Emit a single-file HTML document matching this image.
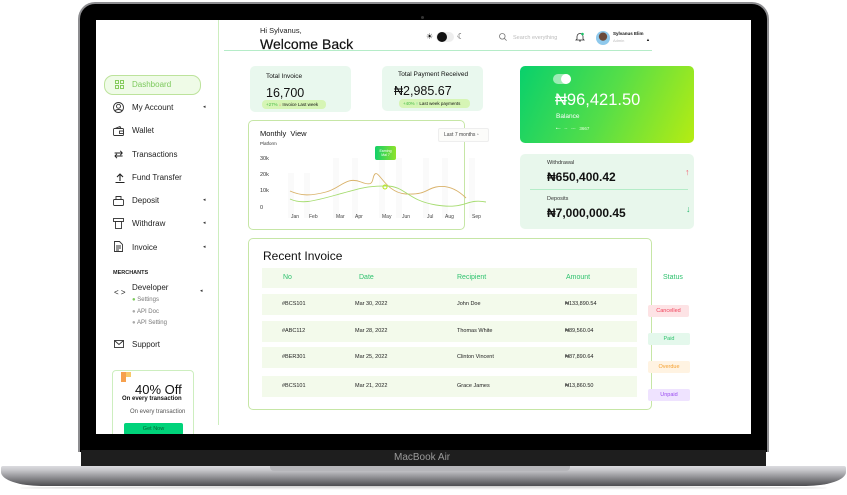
<!DOCTYPE html>
<html><head><meta charset="utf-8"><style>
*{margin:0;padding:0;box-sizing:border-box}
body{width:847px;height:495px;background:#fff;position:relative;overflow:hidden;font-family:"Liberation Sans",sans-serif;color:#111}
.a{position:absolute;white-space:nowrap}
.lid{position:absolute;left:78px;top:2px;width:691px;height:450px;background:#000;border:2px solid #8d8d90;border-bottom:none;border-radius:17px 17px 0 0}
.screen{position:absolute;left:96px;top:20px;width:655px;height:414px;background:#fff;overflow:hidden}
.nav{font-size:8px;color:#222}
.caret{font-size:5px;color:#333}
.card{position:absolute;border-radius:5px}
.row{position:absolute;left:166px;width:375px;height:21px;background:#f3faeb;font-size:5.5px;color:#222}
.row span{position:absolute;top:7px}
.badge{position:absolute;left:552px;width:42px;height:12px;border-radius:2px;font-size:5.5px;text-align:center;line-height:12px}
</style></head><body>
<div class="lid"></div>
<div class="a" style="left:421px;top:16px;width:3px;height:3px;border-radius:50%;background:#333"></div>
<div class="a" style="left:81px;top:450px;width:685px;height:16px;background:#1e1e1e"></div>
<div class="a" style="left:394px;top:452px;font-size:10px;color:#9a9a9a">MacBook Air</div>
<div class="a" style="left:1px;top:466px;width:845px;height:20px;border-radius:2px 2px 40px 40px/2px 2px 14px 14px;background:linear-gradient(#dcdce0 0,#c8c8cc 20%,#8a8a8e 60%,#4d4d50 100%)"></div>
<div class="a" style="left:270px;top:466px;width:300px;height:5px;background:#b6b6ba;border-radius:0 0 4px 4px"></div>
<div class="a" style="left:20px;top:486px;width:807px;height:4px;background:linear-gradient(#ccc,#fff);border-radius:50%"></div>

<div class="screen">
<div class="a" style="left:122px;top:0;width:1px;height:405px;background:#cdeebf"></div>
<div class="a" style="left:8px;top:55px;width:97px;height:20px;border:1px solid #bde39c;background:#effbe7;border-radius:9px"></div>
<svg class="a" style="left:19px;top:60px" width="9" height="9" viewBox="0 0 9 9" fill="none" stroke="#86cc5e" stroke-width="1"><rect x="0.5" y="0.5" width="3" height="3"/><rect x="5.5" y="0.5" width="3" height="3"/><rect x="0.5" y="5.5" width="3" height="3"/><rect x="5.5" y="5.5" width="3" height="3"/></svg>
<div class="a nav" style="left:36px;top:60px;color:#7cc95c">Dashboard</div>
<svg class="a" style="left:17px;top:82px" width="11" height="11" viewBox="0 0 11 11" fill="none" stroke="#333" stroke-width="0.9"><circle cx="5.5" cy="5.5" r="5"/><circle cx="5.5" cy="4.3" r="2"/><path d="M2 9c1-2 6-2 7 0"/></svg>
<div class="a nav" style="left:36px;top:83px">My Account</div><div class="a caret" style="left:107px;top:84px">◂</div>
<svg class="a" style="left:17px;top:106px" width="11" height="10" viewBox="0 0 11 10" fill="none" stroke="#333" stroke-width="0.9"><rect x="0.5" y="2.5" width="10" height="7" rx="1"/><path d="M2 2.5L7 0.5 8 2.5"/><rect x="6.5" y="5" width="4" height="2.5"/></svg>
<div class="a nav" style="left:36px;top:106px">Wallet</div>
<div class="a" style="left:18px;top:128px;font-size:11px;color:#222">⇄</div>
<div class="a nav" style="left:36px;top:130px">Transactions</div>
<svg class="a" style="left:19px;top:153px" width="10" height="10" viewBox="0 0 10 10" fill="none" stroke="#222" stroke-width="1.1"><path d="M5 8V1M2 4l3-3 3 3M0.5 9.5h9"/></svg>
<div class="a nav" style="left:36px;top:153px">Fund Transfer</div>
<svg class="a" style="left:17px;top:175px" width="11" height="11" viewBox="0 0 11 11" fill="none" stroke="#333" stroke-width="0.9"><rect x="0.5" y="4.5" width="10" height="6" rx="1"/><path d="M3 4.5V1.5h5v3"/></svg>
<div class="a nav" style="left:36px;top:176px">Deposit</div><div class="a caret" style="left:107px;top:177px">◂</div>
<svg class="a" style="left:17px;top:198px" width="11" height="11" viewBox="0 0 11 11" fill="none" stroke="#333" stroke-width="0.9"><rect x="0.5" y="0.5" width="10" height="3"/><rect x="2.5" y="3.5" width="6" height="7"/></svg>
<div class="a nav" style="left:36px;top:199px">Withdraw</div><div class="a caret" style="left:107px;top:200px">◂</div>
<svg class="a" style="left:18px;top:221px" width="9" height="11" viewBox="0 0 9 11" fill="none" stroke="#333" stroke-width="0.9"><path d="M0.5 0.5h5l3 3v7h-8z"/><path d="M2 5h5M2 7h5M2 9h3"/></svg>
<div class="a nav" style="left:36px;top:223px">Invoice</div><div class="a caret" style="left:107px;top:224px">◂</div>
<div class="a" style="left:17px;top:250px;font-size:5.5px;font-weight:bold;color:#222">MERCHANTS</div>
<div class="a" style="left:18px;top:268px;font-size:8px;color:#222">&lt; &gt;</div>
<div class="a nav" style="left:36px;top:263px">Developer</div><div class="a caret" style="left:104px;top:268px">◂</div>
<div class="a" style="left:36px;top:277px;font-size:6px;color:#777"><span style="color:#7cc95c">●</span> Settings</div>
<div class="a" style="left:36px;top:289px;font-size:6px;color:#777"><span style="color:#aaa">●</span> API Doc</div>
<div class="a" style="left:36px;top:300px;font-size:6px;color:#777"><span style="color:#aaa">●</span> API Setting</div>
<svg class="a" style="left:18px;top:319px" width="10" height="10" viewBox="0 0 10 10" fill="none" stroke="#333" stroke-width="0.9"><rect x="0.5" y="1.5" width="9" height="7"/><path d="M0.5 1.5l4.5 4 4.5-4"/></svg>
<div class="a nav" style="left:36px;top:320px">Support</div>
<div class="a" style="left:16px;top:350px;width:82px;height:70px;border:1px solid #cdeebf;border-radius:4px"></div>
<div class="a" style="left:25px;top:352px;width:5px;height:10px;background:#f6a04d"></div>
<div class="a" style="left:30px;top:352px;width:5px;height:5px;background:#f8c86a"></div>
<div class="a" style="left:39px;top:363px;font-size:13px;line-height:13px;color:#111">40% Off</div>
<div class="a" style="left:26px;top:376px;font-size:6px;line-height:6px;font-weight:bold">On every transaction</div>
<div class="a" style="left:34px;top:389px;font-size:6px;color:#555">On every transaction</div>
<div class="a" style="left:28px;top:403px;width:59px;height:12px;background:#00d37a;border-radius:2px;font-size:5.5px;text-align:center;line-height:12px;color:#063">Get Now</div>

<div class="a" style="left:164px;top:6px;font-size:7.5px;color:#222">Hi Sylvanus,</div>
<div class="a" style="left:164px;top:16px;font-size:14px;color:#111;-webkit-text-stroke:0.2px #111">Welcome Back</div>
<div class="a" style="left:128px;top:30px;width:428px;height:1px;background:#b5ecc8"></div>
<div class="a" style="left:330px;top:12px;font-size:8px">☀</div>
<div class="a" style="left:340px;top:12px;width:18px;height:10px;border-radius:5px;background:#eee"></div>
<div class="a" style="left:341px;top:12px;width:10px;height:10px;border-radius:50%;background:#111"></div>
<div class="a" style="left:361px;top:12px;font-size:8px">☾</div>
<svg class="a" style="left:403px;top:13px" width="8" height="8" viewBox="0 0 8 8" fill="none" stroke="#777" stroke-width="0.8"><circle cx="3.3" cy="3.3" r="2.8"/><path d="M5.3 5.3L7.6 7.6"/></svg>
<div class="a" style="left:417px;top:15px;font-size:5.5px;color:#bbb">Search everything</div>
<svg class="a" style="left:479px;top:12px" width="10" height="10" viewBox="0 0 10 10" fill="none" stroke="#333" stroke-width="0.8"><path d="M2 7V4.5a3 3 0 0 1 6 0V7l1 1H1z M4 9h2"/><circle cx="7.5" cy="2" r="1.3" fill="#1bc56a" stroke="none"/></svg>
<div class="a" style="left:500px;top:11px;width:14px;height:14px;border-radius:50%;background:radial-gradient(circle at 50% 40%,#6b4a3a 35%,#8fc9ec 40%)"></div>
<div class="a" style="left:517px;top:11px;font-size:4.5px;font-weight:bold">Sylvanus Elim</div>
<div class="a" style="left:517px;top:18px;font-size:4px;color:#bbb">Admin</div>
<div class="a" style="left:550px;top:17px;font-size:4px">▲</div>

<div class="card" style="left:154px;top:46px;width:101px;height:46px;background:#e9f8ee"></div>
<div class="a" style="left:170px;top:53px;font-size:6.5px">Total Invoice</div>
<div class="a" style="left:170px;top:66px;font-size:12.5px">16,700</div>
<div class="a" style="left:166px;top:80px;width:64px;height:9px;border-radius:4px;background:#d6f5b5;font-size:4.5px;line-height:9px;padding-left:4px"><span style="color:#4b4">+27%</span> <span style="color:#e44">↓</span> Invoice Last week</div>
<div class="card" style="left:286px;top:46px;width:101px;height:45px;background:#e9f8ee"></div>
<div class="a" style="left:302px;top:51px;font-size:6.5px">Total Payment Received</div>
<div class="a" style="left:298px;top:64px;font-size:12.5px">₦2,985.67</div>
<div class="a" style="left:303px;top:79px;width:71px;height:9px;border-radius:4px;background:#d6f5b5;font-size:4.5px;line-height:9px;padding-left:4px"><span style="color:#4b4">+40%</span> <span style="color:#2c6">↑</span> Last week payments</div>

<div class="card" style="left:424px;top:46px;width:174px;height:77px;background:linear-gradient(115deg,#08d06c 0%,#55de48 50%,#b6ec12 100%)"></div>
<div class="a" style="left:457px;top:54px;width:18px;height:10px;border-radius:5px;background:rgba(255,255,255,.55)"></div>
<div class="a" style="left:465px;top:54px;width:10px;height:10px;border-radius:50%;background:#fff"></div>
<div class="a" style="left:459px;top:71px;font-size:16.5px;color:#fff">₦96,421.50</div>
<div class="a" style="left:460px;top:93px;font-size:6.5px;color:#fff">Balance</div>
<div class="a" style="left:460px;top:106px;font-size:4.5px;color:#e8ffe0">•‐‐ &nbsp;&nbsp;‐‐ &nbsp;&nbsp;‐‐‐ &nbsp;&nbsp;3667</div>
<div class="card" style="left:424px;top:134px;width:174px;height:75px;background:#e8f7ec"></div>
<div class="a" style="left:451px;top:140px;font-size:5.5px;color:#333">Withdrawal</div>
<div class="a" style="left:451px;top:150px;font-size:12px;font-weight:bold;color:#111">₦650,400.42</div>
<div class="a" style="left:434px;top:169px;width:158px;height:1px;background:#b5ecc8"></div>
<div class="a" style="left:451px;top:176px;font-size:5.5px;color:#333">Deposits</div>
<div class="a" style="left:451px;top:186px;font-size:12px;font-weight:bold;color:#111">₦7,000,000.45</div>
<div class="a" style="left:589px;top:147px;font-size:9px;color:#f06070">↑</div>
<div class="a" style="left:590px;top:184px;font-size:9px;color:#2cb870">↓</div>

<div class="card" style="left:152px;top:100px;width:217px;height:110px;border:1px solid #c6e6a6;border-radius:5px"></div>
<div class="a" style="left:164px;top:109px;font-size:7.5px">Monthly&nbsp; View</div>
<div class="a" style="left:164px;top:121px;font-size:4.5px;color:#333">Platform</div>
<div class="a" style="left:342px;top:108px;width:51px;height:14px;border:1px solid #eee;border-radius:2px;background:#fcfcfa;font-size:5px;line-height:12px;padding-left:5px;color:#444">Last 7 months ▫</div>
<div class="a" style="left:164px;top:136px;font-size:5.5px;color:#333">30k</div>
<div class="a" style="left:164px;top:152px;font-size:5.5px;color:#333">20k</div>
<div class="a" style="left:164px;top:168px;font-size:5.5px;color:#333">10k</div>
<div class="a" style="left:164px;top:185px;font-size:5.5px;color:#333">0</div>
<svg class="a" style="left:180px;top:128px" width="210" height="75" viewBox="0 0 210 75">
<g fill="#fafafa"><rect x="12" y="25" width="6" height="45"/><rect x="28" y="25" width="6" height="45"/><rect x="57" y="10" width="6" height="60"/><rect x="76" y="10" width="6" height="60"/><rect x="103" y="10" width="6" height="60"/><rect x="120" y="10" width="6" height="60"/><rect x="147" y="10" width="6" height="60"/><rect x="166" y="10" width="6" height="60"/><rect x="193" y="10" width="6" height="60"/></g>
<path d="M14 43C25 48 35 48 50 44S70 28 85 34 95 30 99 26 110 45 130 46 150 41 160 39 180 40 190 50" fill="none" stroke="#d9b26a" stroke-width="0.9"/>
<path d="M14 51C25 56 35 54 60 47S90 38 110 38 130 52 160 57 190 50 210 54" fill="none" stroke="#a6dc70" stroke-width="0.9"/>
<circle cx="109" cy="39" r="2" fill="none" stroke="#b6e61a" stroke-width="1"/>
</svg>
<div class="a" style="left:279px;top:126px;width:21px;height:14px;border-radius:2px;background:linear-gradient(90deg,#12d06a,#8fe22a);font-size:3.5px;color:#fff;text-align:center;padding-top:3px;line-height:4px">Earning<br>Mai 7</div>
<div class="a" style="left:195px;top:194px;font-size:5px;color:#444">Jan</div>
<div class="a" style="left:213px;top:194px;font-size:5px;color:#444">Feb</div>
<div class="a" style="left:240px;top:194px;font-size:5px;color:#444">Mar</div>
<div class="a" style="left:259px;top:194px;font-size:5px;color:#444">Apr</div>
<div class="a" style="left:286px;top:194px;font-size:5px;color:#444">May</div>
<div class="a" style="left:306px;top:194px;font-size:5px;color:#444">Jun</div>
<div class="a" style="left:331px;top:194px;font-size:5px;color:#444">Jul</div>
<div class="a" style="left:349px;top:194px;font-size:5px;color:#444">Aug</div>
<div class="a" style="left:376px;top:194px;font-size:5px;color:#444">Sep</div>

<div class="card" style="left:152px;top:218px;width:404px;height:172px;border:1px solid #c6e6a6;border-radius:5px"></div>
<div class="a" style="left:167px;top:229px;font-size:12px;color:#111">Recent Invoice</div>
<div class="a" style="left:166px;top:248px;width:375px;height:20px;background:#f3faec"></div>
<div class="a" style="left:187px;top:254px;font-size:7px;color:#2ec26e">No</div>
<div class="a" style="left:263px;top:254px;font-size:7px;color:#2ec26e">Date</div>
<div class="a" style="left:361px;top:254px;font-size:7px;color:#2ec26e">Recipient</div>
<div class="a" style="left:470px;top:254px;font-size:7px;color:#2ec26e">Amount</div>
<div class="a" style="left:567px;top:254px;font-size:7px;color:#2ec26e">Status</div>
<div class="row" style="top:274px"><span style="left:20px">#BCS101</span><span style="left:93px">Mar 30, 2022</span><span style="left:195px">John Doe</span><span style="left:303px">₦133,890.54</span></div>
<div class="row" style="top:301px"><span style="left:20px">#ABC112</span><span style="left:93px">Mar 28, 2022</span><span style="left:195px">Thomas White</span><span style="left:303px">₦89,560.04</span></div>
<div class="row" style="top:327px"><span style="left:20px">#BER301</span><span style="left:93px">Mar 25, 2022</span><span style="left:195px">Clinton Vincent</span><span style="left:303px">₦87,890.64</span></div>
<div class="row" style="top:356px"><span style="left:20px">#BCS101</span><span style="left:93px">Mar 21, 2022</span><span style="left:195px">Grace James</span><span style="left:303px">₦13,860.50</span></div>
<div class="badge" style="top:285px;width:41px;background:#fde3e5;color:#f0405a">Cancelled</div>
<div class="badge" style="top:313px;background:#e4f8ec;color:#2ec26e">Paid</div>
<div class="badge" style="top:341px;background:#fff3e2;color:#f5a030">Overdue</div>
<div class="badge" style="top:369px;background:#efe3ff;color:#9a4cf0">Unpaid</div>
</div>
</body></html>
